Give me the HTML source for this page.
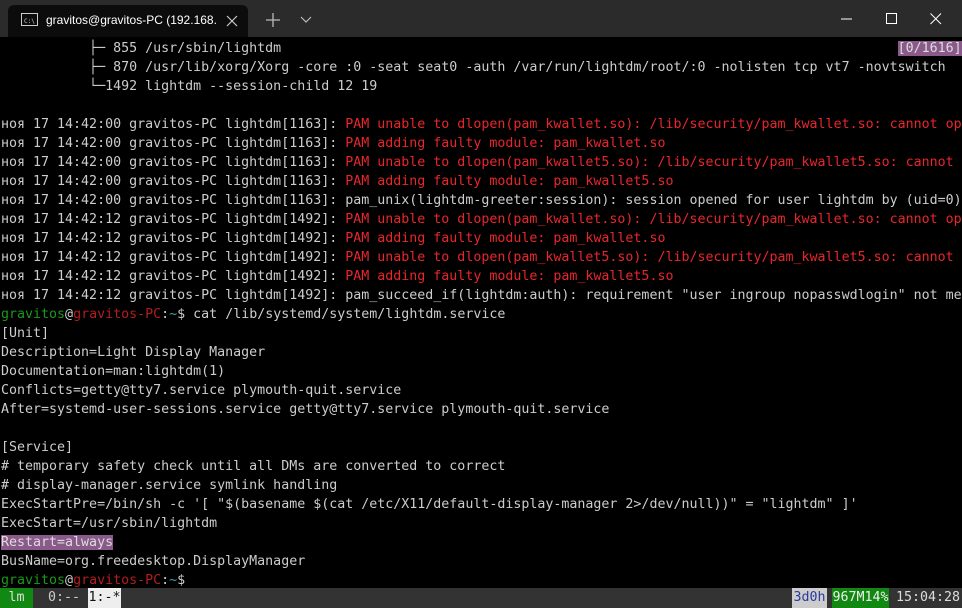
<!DOCTYPE html>
<html><head><meta charset="utf-8"><style>
html,body{margin:0;padding:0;background:#000;width:962px;height:608px;overflow:hidden}
#tabbar{position:absolute;left:0;top:0;width:962px;height:37px;background:#2b2b2b}
#tab{position:absolute;left:8px;top:5px;width:240px;height:32px;background:#0c0c0c;border-radius:6px 6px 0 0}
.t{font-family:"Liberation Sans","DejaVu Sans",sans-serif;color:#fff;font-size:12px;position:absolute;white-space:nowrap;overflow:hidden;width:172px}
pre{position:absolute;left:1px;top:39px;margin:0;font-family:"DejaVu Sans Mono","Liberation Mono",monospace;font-size:13.3px;line-height:19px;color:#cccccc;white-space:pre}
.r{color:#e8262c}.g{color:#1a9a1a}.h{color:#b21e1e}.c{color:#3aa6a6}
.p{background:#8a5a8a;color:#ddd}
#sb{position:absolute;left:0;top:588px;width:962px;height:20px;background:#333}
#sb span{position:absolute;top:0;height:20px;line-height:20px;font-family:"DejaVu Sans Mono",monospace;font-size:13.3px;color:#ccc}
</style></head><body>
<div id="tabbar">
<div id="tab"></div>
<svg style="position:absolute;left:21px;top:13px" width="18" height="14"><rect x="0.5" y="0.5" width="16" height="12" fill="none" stroke="#ccc"/><text x="3" y="10" font-size="6" fill="#ccc" font-family="DejaVu Sans Mono">C:\</text></svg>
<div class="t" style="left:46px;top:13px">gravitos@gravitos-PC (192.168.</div>
<svg style="position:absolute;left:226px;top:15px" width="12" height="12"><path d="M1 1L11 11M11 1L1 11" stroke="#ccc" stroke-width="1.2"/></svg>
<svg style="position:absolute;left:266px;top:13px" width="14" height="14"><path d="M7 0V14M0 7H14" stroke="#bbb" stroke-width="1.3"/></svg>
<svg style="position:absolute;left:300px;top:16px" width="12" height="8"><path d="M1 1L6 6L11 1" stroke="#bbb" fill="none" stroke-width="1.2"/></svg>
<svg style="position:absolute;left:841px;top:18px" width="12" height="2"><path d="M0 1H11" stroke="#fff"/></svg>
<svg style="position:absolute;left:886px;top:13px" width="12" height="12"><rect x="0.5" y="0.5" width="10" height="10" fill="none" stroke="#fff"/></svg>
<svg style="position:absolute;left:930px;top:13px" width="12" height="12"><path d="M0.5 0.5L11 11M11 0.5L0.5 11" stroke="#fff"/></svg>
</div>
<pre>           ├─ 855 /usr/sbin/lightdm                                                                             <span class="p">[0/1616]</span>
           ├─ 870 /usr/lib/xorg/Xorg -core :0 -seat seat0 -auth /var/run/lightdm/root/:0 -nolisten tcp vt7 -novtswitch
           └─1492 lightdm --session-child 12 19

ноя 17 14:42:00 gravitos-PC lightdm[1163]: <span class="r">PAM unable to dlopen(pam_kwallet.so): /lib/security/pam_kwallet.so: cannot op</span>
ноя 17 14:42:00 gravitos-PC lightdm[1163]: <span class="r">PAM adding faulty module: pam_kwallet.so</span>
ноя 17 14:42:00 gravitos-PC lightdm[1163]: <span class="r">PAM unable to dlopen(pam_kwallet5.so): /lib/security/pam_kwallet5.so: cannot</span>
ноя 17 14:42:00 gravitos-PC lightdm[1163]: <span class="r">PAM adding faulty module: pam_kwallet5.so</span>
ноя 17 14:42:00 gravitos-PC lightdm[1163]: pam_unix(lightdm-greeter:session): session opened for user lightdm by (uid=0)
ноя 17 14:42:12 gravitos-PC lightdm[1492]: <span class="r">PAM unable to dlopen(pam_kwallet.so): /lib/security/pam_kwallet.so: cannot op</span>
ноя 17 14:42:12 gravitos-PC lightdm[1492]: <span class="r">PAM adding faulty module: pam_kwallet.so</span>
ноя 17 14:42:12 gravitos-PC lightdm[1492]: <span class="r">PAM unable to dlopen(pam_kwallet5.so): /lib/security/pam_kwallet5.so: cannot</span>
ноя 17 14:42:12 gravitos-PC lightdm[1492]: <span class="r">PAM adding faulty module: pam_kwallet5.so</span>
ноя 17 14:42:12 gravitos-PC lightdm[1492]: pam_succeed_if(lightdm:auth): requirement "user ingroup nopasswdlogin" not me
<span class="g">gravitos</span>@<span class="h">gravitos-PC</span>:<span class="c">~</span>$ cat /lib/systemd/system/lightdm.service
[Unit]
Description=Light Display Manager
Documentation=man:lightdm(1)
Conflicts=getty@tty7.service plymouth-quit.service
After=systemd-user-sessions.service getty@tty7.service plymouth-quit.service

[Service]
# temporary safety check until all DMs are converted to correct
# display-manager.service symlink handling
ExecStartPre=/bin/sh -c '[ "$(basename $(cat /etc/X11/default-display-manager 2&gt;/dev/null))" = "lightdm" ]'
ExecStart=/usr/sbin/lightdm
<span class="p">Restart=always</span>
BusName=org.freedesktop.DisplayManager
<span class="g">gravitos</span>@<span class="h">gravitos-PC</span>:<span class="c">~</span>$</pre>
<div id="sb">
<span style="left:0;width:33px;background:#118811;color:#ddd;text-align:center">lm</span>
<span style="left:48px">0:--</span>
<span style="left:88px;width:33px;background:#eee;color:#111;text-align:center">1:-*</span>
<span style="left:792px;width:35px;background:#ccc;color:#2a3aa0;text-align:center">3d0h</span>
<span style="left:832px;width:57px;background:#118811;color:#eee;text-align:center">967M14%</span>
<span style="left:896px;color:#ddd">15:04:28</span>
</div>
</body></html>
